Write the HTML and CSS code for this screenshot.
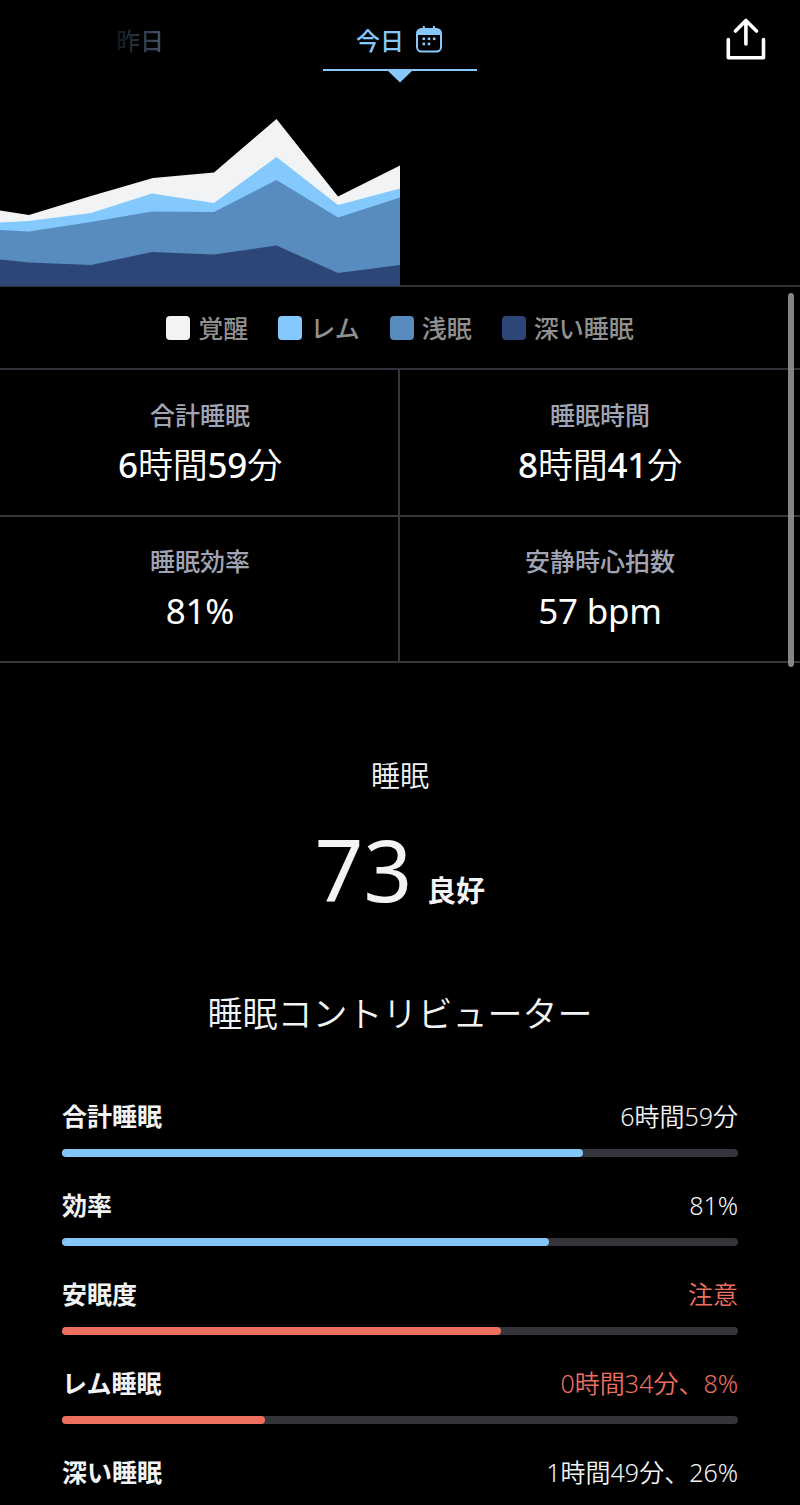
FILE: index.html
```html
<!DOCTYPE html>
<html lang="ja">
<head>
<meta charset="utf-8">
<title>睡眠</title>
<link rel="stylesheet" href="styles.css">
</head>
<body>
<div class="screen">
  <header class="topbar">
    <div class="day day-prev">昨日</div>
    <div class="day day-current">
      <span>今日</span>
      <svg class="calendar" width="26" height="27" viewBox="0 0 26 27">
        <rect x="1" y="3" width="24" height="22.500" rx="4.500" fill="none" stroke="#86c8fb" stroke-width="2"/>
        <path d="M1 9V7a4.500 4.500 0 0 1 4.500-4.500h15A4.500 4.500 0 0 1 25 7v2z" fill="#86c8fb"/>
        <path d="M7.800 0v4M18 0v4" stroke="#86c8fb" stroke-width="2"/>
        <g fill="#86c8fb"><rect x="6.500" y="11.500" width="2.600" height="2.600"/><rect x="11.700" y="11.500" width="2.600" height="2.600"/><rect x="16.900" y="11.500" width="2.600" height="2.600"/><rect x="6.500" y="16.600" width="2.600" height="2.600"/><rect x="11.700" y="16.600" width="2.600" height="2.600"/></g>
      </svg>
    </div>
    <svg class="share" width="40" height="42" viewBox="0 0 40 42" fill="none" stroke="#fff" stroke-width="3.600" stroke-linecap="round" stroke-linejoin="round">
      <path d="M2.300 21.500v18.200h35.200V21.500M19.900 26V2.500M9.500 13L19.900 2.500L30.500 13"/>
    </svg>
  </header>
  <svg class="marker" width="154" height="14" viewBox="0 0 154 14" fill="#86c8fb">
    <path d="M0 0h154v2H89L77 13.500L65 2H0z"/>
  </svg>
  <svg class="chart" width="800" height="202" viewBox="0 0 800 202">
    <path fill="#f2f3f5" d="M0 126.500L29 131L91 112L153 94L214 88.500L276.500 35L338 112.500L400 81.500V202H0z"/>
    <path fill="#84c9fd" d="M0 138.500L29 137L91 129L152 109.500L214 119L276.500 73L338 121L400 104.500V202H0z"/>
    <path fill="#588cbf" d="M0 146L29 147.500L91 138L152 127.500L214 128L276.500 96L338 133.500L400 113.500V202H0z"/>
    <path fill="#2d4678" d="M0 175.500L29 178.500L91 181L152 168L214 170.500L276.500 161.500L338 189L400 181V202H0z"/>
  </svg>
  <div class="legend">
    <div class="key"><i class="swatch awake"></i><span>覚醒</span></div>
    <div class="key"><i class="swatch rem"></i><span>レム</span></div>
    <div class="key"><i class="swatch light"></i><span>浅眠</span></div>
    <div class="key"><i class="swatch deep"></i><span>深い睡眠</span></div>
  </div>
  <section class="stats">
    <div class="stat"><div class="stat-label">合計睡眠</div><div class="stat-value time"><b>6</b>時間<b>59</b>分</div></div>
    <div class="stat"><div class="stat-label">睡眠時間</div><div class="stat-value time"><b>8</b>時間<b>41</b>分</div></div>
    <div class="stat"><div class="stat-label">睡眠効率</div><div class="stat-value">81%</div></div>
    <div class="stat"><div class="stat-label">安静時心拍数</div><div class="stat-value">57 bpm</div></div>
  </section>
  <section class="score">
    <div class="score-title">睡眠</div>
    <div class="score-line"><span class="score-number">73</span><span class="score-grade">良好</span></div>
  </section>
  <h2 class="heading">睡眠コントリビューター</h2>
  <section class="contributors">
    <div class="item"><div class="row"><span class="name">合計睡眠</span><span class="value">6時間59分</span></div><div class="track"><div class="fill" style="width:520.500px"></div></div></div>
    <div class="item"><div class="row"><span class="name">効率</span><span class="value">81%</span></div><div class="track"><div class="fill" style="width:487px"></div></div></div>
    <div class="item warn"><div class="row"><span class="name">安眠度</span><span class="value">注意</span></div><div class="track"><div class="fill" style="width:439px"></div></div></div>
    <div class="item warn"><div class="row"><span class="name">レム睡眠</span><span class="value">0時間34分、8%</span></div><div class="track"><div class="fill" style="width:203px"></div></div></div>
    <div class="item"><div class="row"><span class="name">深い睡眠</span><span class="value">1時間49分、26%</span></div></div>
  </section>
  <div class="scrollbar"></div>
</div>
</body>
</html>
```
FILE: styles.css
```css
* { box-sizing: border-box; }
body { margin: 0; background: #000; }
svg { display: block; }
.screen {
  position: relative;
  width: 800px;
  height: 1505px;
  overflow: hidden;
  background: #000;
  color: #f2f3f5;
  font-family: "Noto Sans", "Noto Sans CJK JP", sans-serif;
  font-size: 25px;
}
.topbar {
  display: grid;
  grid-template-columns: 280px 240px 280px;
  height: 69px;
}
.day { font-size: 24px; font-weight: 500; line-height: 36px; padding-top: 23px; }
.day-prev {
  justify-self: center;
  color: transparent;
  background: linear-gradient(90deg, #10161b, #46596a);
  -webkit-background-clip: text;
  background-clip: text;
}
.day-current { display: flex; justify-content: center; gap: 12px; padding-right: 2px; color: #86c8fb; }
.calendar { margin-top: 3px; }
.share { justify-self: end; margin: 18px 34px 0 0; }
.marker { margin: 0 auto; }
.chart { margin-top: 1px; margin-bottom: -1px; }
.legend {
  display: flex;
  justify-content: center;
  gap: 30px;
  height: 85px;
  padding-top: 23px;
  border-top: 2px solid #30323a;
  border-bottom: 2px solid #30323a;
}
.key { display: flex; align-items: center; gap: 8px; height: 36px; color: #909090; font-weight: 500; line-height: 36px; }
.swatch { width: 24px; height: 24px; border-radius: 4px; }
.awake { background: #f2f3f5; }
.rem { background: #84c9fd; }
.light { background: #588cbf; }
.deep { background: #2d4678; }
.stats { display: grid; grid-template-columns: 400px 400px; grid-template-rows: 147px 146px; }
.stat { padding-top: 27px; border-bottom: 2px solid #36363b; text-align: center; }
.stat:nth-child(odd) { border-right: 2px solid #36363b; padding-left: 2px; }
.stat:nth-child(n+3) { padding-top: 26px; }
.stat-label { color: #a0a5b5; font-weight: 500; line-height: 36px; }
.stat-value { margin-top: 6px; color: #fff; font-size: 35px; font-weight: 430; line-height: 52px; letter-spacing: -.2px; }
.time { font-weight: 350; }
.time b { font-weight: 460; }
.score { padding-top: 92px; text-align: center; }
.score-title { font-size: 29px; font-weight: 350; line-height: 42px; }
.score-line { display: flex; justify-content: center; align-items: baseline; gap: 15px; height: 120px; margin-top: 12px; line-height: 120px; }
.score-number { font-size: 85px; }
.score-grade { font-size: 29px; font-weight: 700; }
.heading { margin: 60px 0 0; font-size: 35px; font-weight: 350; line-height: 50px; text-align: center; }
.contributors { padding: 59px 62px 0; }
.item { height: 89px; }
.row { display: flex; justify-content: space-between; height: 36px; line-height: 36px; }
.value { font-weight: 350; }
.name { font-weight: 600; }
.track { height: 8px; margin-top: 14.500px; border-radius: 4px; background: #34353a; }
.fill { height: 8px; border-radius: 4px; background: #84c6f8; }
.warn .value { color: #ec6f60; }
.warn .fill { background: #ec6f60; }
.scrollbar { position: absolute; left: 788px; top: 293px; width: 6px; height: 374px; border-radius: 3px; background: rgba(150, 150, 150, .88); }
```
